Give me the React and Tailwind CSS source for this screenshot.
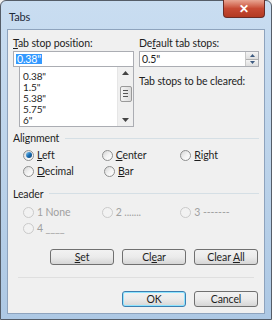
import React from "react";

const font = { fontFamily: 'Lato, "Noto Sans", sans-serif' };

const Radio = ({ u, rest, checked, disabled }) => (
  <div className="flex items-center gap-[3px] w-[81px]">
    <span
      className={`w-[11px] h-[11px] rounded-full border flex items-center justify-center ${
        disabled
          ? "border-[#cacaca] bg-[#f2f2f2]"
          : "border-[#8e8f8f] bg-gradient-to-br from-[#d4d4d4] via-[#f2f2f2] to-white"
      }`}
    >
      {checked && (
        <span className="w-[6px] h-[6px] rounded-full bg-gradient-to-br from-[#8ad1f5] via-[#1a71b8] to-[#0d3f70]" />
      )}
    </span>
    <span className={disabled ? "text-[#a0a0a0]" : "text-[#1e1e1e]"}>
      {u ? <span className="underline">{u}</span> : null}
      {rest}
    </span>
  </div>
);

const Btn = ({ children, focus }) => (
  <div
    className={`w-[64px] h-[16px] rounded-[3px] border flex items-center justify-center text-[#1e1e1e] bg-gradient-to-b from-[#f2f2f2] via-[#ebebeb] to-[#d6d6d6] ${
      focus ? "border-[#3c7fb1] shadow-[inset_0_0_0_1px_#8ee4ff]" : "border-[#707070]"
    }`}
  >
    <span>{children}</span>
  </div>
);

const GroupLabel = ({ children }) => (
  <div className="flex items-center gap-[6px] text-[#1e1e1e]">
    <span>{children}</span>
    <div className="flex-1 h-px bg-[#d5dfe5]" />
  </div>
);

export default function App() {
  return (
    <div
      style={font}
      className="w-[272px] h-[320px] bg-[#f0f0f0] text-[10.5px] leading-none tracking-[-0.1px]"
    >
      <div className="w-full h-full rounded-t-[6px] border border-[#555d68] bg-gradient-to-b from-[#c9ddf1] via-[#bcd3ea] to-[#adc8e4] flex flex-col px-[6px] pb-[5px]">
        {/* Title bar */}
        <div className="h-[28px] flex items-start justify-between">
          <span className="text-[11px] text-[#1e2a3a] pt-[10px] pl-[2px]">Tabs</span>
          <div className="w-[42px] h-[18px] mt-[-1px] rounded-b-[4px] border border-[#6b2b24] border-t-0 bg-gradient-to-b from-[#e8a593] via-[#c74a34] to-[#b23a22] flex items-center justify-center text-white font-bold text-[12px]">
            ✕
          </div>
        </div>

        {/* Client area */}
        <div className="flex-1 bg-[#f0f0f0] border border-[#8ea3bd] px-[5px] pt-[8px]">
          <div className="flex gap-[5px]">
            <div className="w-[121px] shrink-0 flex flex-col">
              <div className="text-[#1e1e1e] h-[13px]">
                <span className="underline">T</span>ab stop position:
              </div>
              <div className="h-[16px] border border-[#abadb3] bg-white flex items-center px-[2px]">
                <span className="bg-[#3399ff] text-white px-[1px]">0.38"</span>
              </div>
              <div className="ml-[6px] h-[60px] border border-[#abadb3] border-t-0 bg-white flex">
                <div className="flex-1 flex flex-col pl-[3px] pt-[4px] text-[#1e1e1e] text-[10px] leading-[11px]">
                  <div>0.38"</div>
                  <div>1.5"</div>
                  <div>5.38"</div>
                  <div>5.75"</div>
                  <div>6"</div>
                </div>
                <div className="w-[16px] bg-[#f0f0f0] flex flex-col items-center justify-between py-[4px] border-l border-[#e6e6e6]">
                  <svg width="7" height="4" viewBox="0 0 7 4">
                    <path d="M0 4 L3.5 0 L7 4 Z" fill="#444" />
                  </svg>
                  <div className="w-[12px] h-[16px] -mt-[6px] rounded-[2px] border border-[#9a9a9a] bg-gradient-to-r from-[#f4f4f4] to-[#dcdcdc] flex flex-col items-center justify-center gap-[2px]">
                    <div className="w-[5px] h-px bg-[#555]" />
                    <div className="w-[5px] h-px bg-[#555]" />
                    <div className="w-[5px] h-px bg-[#555]" />
                  </div>
                  <svg width="7" height="4" viewBox="0 0 7 4">
                    <path d="M0 0 L3.5 4 L7 0 Z" fill="#444" />
                  </svg>
                </div>
              </div>
            </div>

            <div className="flex-1 flex flex-col">
              <div className="text-[#1e1e1e] h-[13px]">
                De<span className="underline">f</span>ault tab stops:
              </div>
              <div className="h-[16px] border border-[#abadb3] bg-white flex items-center pl-[2px]">
                <span className="flex-1 text-[#1e1e1e]">0.5"</span>
                <div className="w-[13px] h-full flex flex-col border-l border-[#c8c8c8]">
                  <div className="flex-1 bg-gradient-to-b from-[#f4f4f4] to-[#dedede] flex items-center justify-center border-b border-[#b0b0b0]">
                    <svg width="5" height="3" viewBox="0 0 5 3">
                      <path d="M0 3 L2.5 0 L5 3 Z" fill="#3d5a80" />
                    </svg>
                  </div>
                  <div className="flex-1 bg-gradient-to-b from-[#f4f4f4] to-[#dedede] flex items-center justify-center">
                    <svg width="5" height="3" viewBox="0 0 5 3">
                      <path d="M0 0 L2.5 3 L5 0 Z" fill="#3d5a80" />
                    </svg>
                  </div>
                </div>
              </div>
              <div className="text-[#1e1e1e] mt-[9px] whitespace-nowrap">Tab stops to be cleared:</div>
            </div>
          </div>

          {/* Alignment */}
          <div className="mt-[6px]">
            <GroupLabel>Alignment</GroupLabel>
            <div className="pl-[10px] pt-[6px] flex flex-col gap-[5px]">
              <div className="flex">
                <Radio u="L" rest="eft" checked />
                <Radio u="C" rest="enter" />
                <Radio u="R" rest="ight" />
              </div>
              <div className="flex">
                <Radio u="D" rest="ecimal" />
                <Radio u="B" rest="ar" />
              </div>
            </div>
          </div>

          {/* Leader */}
          <div className="mt-[12px]">
            <GroupLabel>Leader</GroupLabel>
            <div className="pl-[10px] pt-[8px] flex flex-col gap-[5px]">
              <div className="flex">
                <Radio rest="1 None" disabled />
                <Radio rest="2 ......." disabled />
                <Radio rest="3 -------" disabled />
              </div>
              <div className="flex">
                <Radio rest="4 ____" disabled />
              </div>
            </div>
          </div>

          {/* Set / Clear buttons */}
          <div className="flex justify-end gap-[8px] pr-[1px] mt-[15px]">
            <Btn>
              <span className="underline">S</span>et
            </Btn>
            <Btn>
              Cl<span className="underline">e</span>ar
            </Btn>
            <Btn>
              Clear <span className="underline">A</span>ll
            </Btn>
          </div>

          <div className="h-px bg-[#dfdfdf] mt-[12px] mx-[5px]" />

          <div className="flex justify-end gap-[8px] pr-[1px] mt-[13px]">
            <Btn focus>OK</Btn>
            <Btn>Cancel</Btn>
          </div>
        </div>
      </div>
    </div>
  );
}
